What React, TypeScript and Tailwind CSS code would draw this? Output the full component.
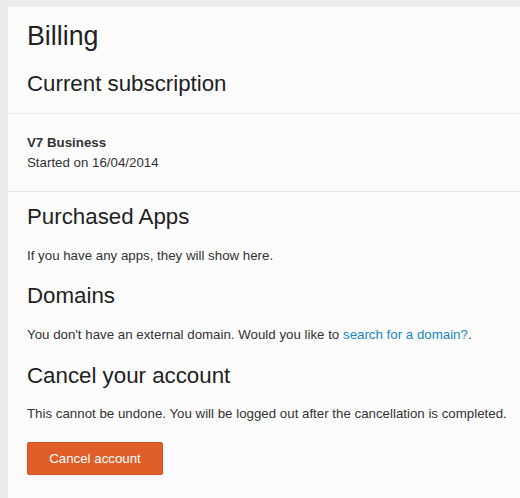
import React from 'react';

const font = { fontFamily: '"Liberation Sans", Arial, Helvetica, sans-serif' };

const Heading: React.FC<{ children: React.ReactNode; className?: string }> = ({ children, className = '' }) => (
  <h2 className={`text-[22.3px] leading-[28px] font-normal text-[#222222] ${className}`}>{children}</h2>
);

const Text: React.FC<{ children: React.ReactNode; className?: string }> = ({ children, className = '' }) => (
  <p className={`text-[13.3px] leading-5 text-[#333333] ${className}`}>{children}</p>
);

export default function App() {
  return (
    <div className="min-h-screen flex flex-col bg-[#ebebeb] pl-2 pt-[7px]" style={font}>
      <div className="flex-1 bg-[#fcfcfc]">
        {/* Page title */}
        <div className="pl-[19px] pr-2 pt-[13px] pb-[15px] border-b border-[#e6e6e6]">
          <h1 className="text-[26.8px] leading-[32px] font-normal text-[#222222]">Billing</h1>
          <Heading className="mt-[18px]">Current subscription</Heading>
        </div>

        {/* Subscription details */}
        <div className="pl-[19px] pr-2 pt-[19px] pb-[18px] border-b border-[#e6e6e6]">
          <Text className="font-bold">V7 Business</Text>
          <Text>Started on 16/04/2014</Text>
        </div>

        <div className="pl-[19px] pr-2 pt-[11px]">
          <Heading>Purchased Apps</Heading>
          <Text className="mt-[15px]">If you have any apps, they will show here.</Text>

          <Heading className="mt-4">Domains</Heading>
          <Text className="mt-[15px]">
            You don't have an external domain. Would you like to{' '}
            <a href="#" className="text-[#1a85c8]">search for a domain?</a>.
          </Text>

          <Heading className="mt-[17px]">Cancel your account</Heading>
          <Text className="mt-[14px] whitespace-nowrap">
            This cannot be undone. You will be logged out after the cancellation is completed.
          </Text>

          <button className="mt-[18px] w-[136px] h-[33px] bg-[#e05e2a] border border-[#d4531f] rounded-[2px] text-white text-[13.3px]">
            Cancel account
          </button>
        </div>
      </div>
    </div>
  );
}
